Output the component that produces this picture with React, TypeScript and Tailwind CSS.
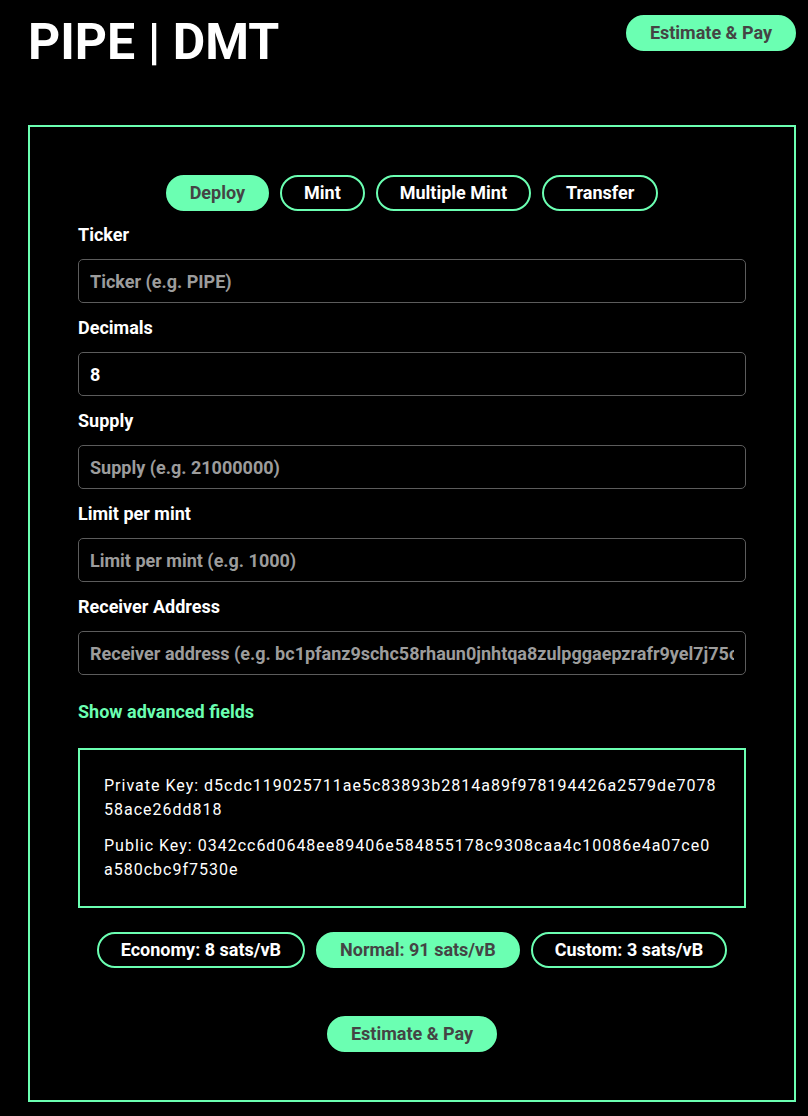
import React from 'react';

const green = 'border-[#6bffb2]';

type Field = {
    label: string;
    placeholder: string;
    value?: string;
};

const fields: Field[] = [
    { label: 'Ticker', placeholder: 'Ticker (e.g. PIPE)' },
    { label: 'Decimals', placeholder: 'Decimals', value: '8' },
    { label: 'Supply', placeholder: 'Supply (e.g. 21000000)' },
    { label: 'Limit per mint', placeholder: 'Limit per mint (e.g. 1000)' },
    {
        label: 'Receiver Address',
        placeholder:
            'Receiver address (e.g. bc1pfanz9schc58rhaun0jnhtqa8zulpggaepzrafr9yel7j75cz8ltq5clvxw)',
    },
];

const tabs = ['Deploy', 'Mint', 'Multiple Mint', 'Transfer'];
const fees = ['Economy: 8 sats/vB', 'Normal: 91 sats/vB', 'Custom: 3 sats/vB'];

const PillButton: React.FC<{ label: string; active?: boolean }> = ({ label, active }) => (
    <button
        type="button"
        className={
            active
                ? `h-9 px-[22px] rounded-full border-2 ${green} bg-[#6bffb2] text-[#444444] text-[18px] font-bold leading-none`
                : `h-9 px-[22px] rounded-full border-2 ${green} bg-black text-white text-[18px] font-bold leading-none`
        }
    >
        {label}
    </button>
);

const App: React.FC = () => {
    return (
        <div className="min-h-screen bg-black text-white font-['Roboto',sans-serif] pb-[14px]">
            <header className="flex justify-between items-start pl-[28px] pr-[12px] pt-[15px]">
                <h1 className="mt-[2px] text-[50px] font-bold leading-none">PIPE | DMT</h1>
                <PillButton label="Estimate & Pay" active />
            </header>

            <main className={`mt-[58px] ml-[28px] mr-[12px] border-2 ${green} px-12 pt-12 pb-12`}>
                <div className="flex justify-center gap-[11px]">
                    {tabs.map((t) => (
                        <PillButton key={t} label={t} active={t === 'Deploy'} />
                    ))}
                </div>

                <div className="mt-[13px]">
                    {fields.map((f) => (
                        <div key={f.label} className="mb-[14px]">
                            <label className="block text-[18px] leading-[21px] font-bold mb-[14px]">
                                {f.label}
                            </label>
                            <input
                                type="text"
                                placeholder={f.placeholder}
                                defaultValue={f.value}
                                className="block w-full h-[44px] px-[11px] bg-black border border-[#5c5c5c] rounded-[5px] text-[18px] font-bold text-white placeholder:text-[#9c9c9c] outline-none"
                            />
                        </div>
                    ))}
                </div>

                <button
                    type="button"
                    className="block mt-[26px] text-[18px] leading-[21px] font-bold text-[#6bffb2]"
                >
                    Show advanced fields
                </button>

                <div className={`mt-[26px] border-2 ${green} p-6 text-[16px] leading-6 tracking-[1px]`}>
                    <p>
                        Private Key: d5cdc119025711ae5c83893b2814a89f978194426a2579de7078
                        <br />
                        58ace26dd818
                    </p>
                    <p className="mt-3">
                        Public Key: 0342cc6d0648ee89406e584855178c9308caa4c10086e4a07ce0
                        <br />
                        a580cbc9f7530e
                    </p>
                </div>

                <div className="mt-[24px] flex justify-center gap-[11px]">
                    {fees.map((f) => (
                        <PillButton key={f} label={f} active={f.startsWith('Normal')} />
                    ))}
                </div>

                <div className="mt-[48px] flex justify-center">
                    <PillButton label="Estimate & Pay" active />
                </div>
            </main>
        </div>
    );
};

export default App;
